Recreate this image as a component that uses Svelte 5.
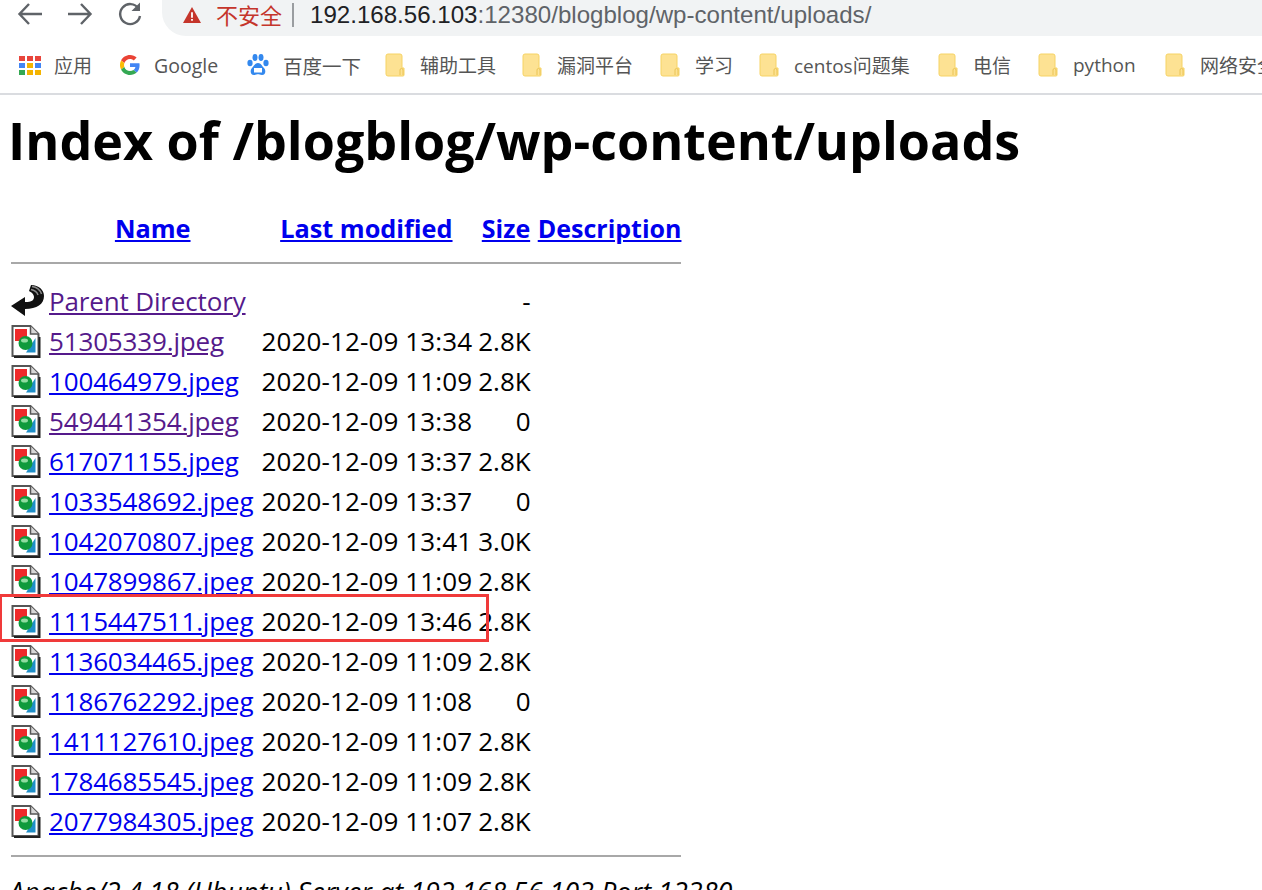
<script>
  const bookmarks = [
    { label: "辅助工具", w: 137 },
    { label: "漏洞平台", w: 138 },
    { label: "学习", w: 99 },
    { label: "centos问题集", w: 179 },
    { label: "电信", w: 100 },
    { label: "python", w: 127 },
    { label: "网络安全", w: 137 },
  ];
  const files = [
    { name: "51305339.jpeg", date: "2020-12-09 13:34", size: "2.8K", seen: true },
    { name: "100464979.jpeg", date: "2020-12-09 11:09", size: "2.8K" },
    { name: "549441354.jpeg", date: "2020-12-09 13:38", size: "0", seen: true },
    { name: "617071155.jpeg", date: "2020-12-09 13:37", size: "2.8K" },
    { name: "1033548692.jpeg", date: "2020-12-09 13:37", size: "0" },
    { name: "1042070807.jpeg", date: "2020-12-09 13:41", size: "3.0K" },
    { name: "1047899867.jpeg", date: "2020-12-09 11:09", size: "2.8K" },
    { name: "1115447511.jpeg", date: "2020-12-09 13:46", size: "2.8K" },
    { name: "1136034465.jpeg", date: "2020-12-09 11:09", size: "2.8K" },
    { name: "1186762292.jpeg", date: "2020-12-09 11:08", size: "0" },
    { name: "1411127610.jpeg", date: "2020-12-09 11:07", size: "2.8K" },
    { name: "1784685545.jpeg", date: "2020-12-09 11:09", size: "2.8K" },
    { name: "2077984305.jpeg", date: "2020-12-09 11:07", size: "2.8K" },
  ];
  const appsColors = ["#e8453c", "#e8453c", "#e8453c", "#4285f4", "#f4b400", "#4285f4", "#34a853", "#f4b400", "#f4b400"];
</script>

{#snippet folder()}
  <svg class="fold" width="20" height="24" viewBox="0 0 20 24">
    <path d="M3 1h12a2 2 0 0 1 2 2v12h2v7a1 1 0 0 1-1 1H3a2 2 0 0 1-2-2V3a2 2 0 0 1 2-2z" fill="#fde293" stroke="#f6d365" />
    <path d="M15 22v-5a1.500 1.500 0 0 1 3 0v5" fill="none" stroke="#eac455" />
  </svg>
{/snippet}

{#snippet fileIcon()}
  <svg class="ico" width="30" height="33" viewBox="0 0 30 33">
    <path d="M1.500 1h18l8 8v22h-26z" fill="#fff" stroke="#555" stroke-width="2" />
    <path d="M19.500 1v8h8" fill="#d8d8d8" stroke="#555" stroke-width="1.500" />
    <rect x="4" y="4" width="12" height="12" fill="#ee2a2a" />
    <path d="M15 27.500 24.500 13v14.500z" fill="#1f8fc8" />
    <circle cx="14.500" cy="18" r="7" fill="#0f9a3c" />
    <ellipse cx="13.500" cy="15.500" rx="3.500" ry="2" fill="#8fdca0" />
    <path d="M28.500 12v20H3" fill="none" stroke="#222" stroke-width="2" />
  </svg>
{/snippet}

<div class="page">
  <header class="chrome">
    <div class="nav">
      <svg width="30" height="30" viewBox="0 0 30 30" fill="none" stroke="#5f6368" stroke-width="2.400">
        <path d="M27 15H5M14 5 4.500 15 14 25" />
      </svg>
      <svg width="30" height="30" viewBox="0 0 30 30" fill="none" stroke="#5f6368" stroke-width="2.400">
        <path d="M3 15h22M16 5l9.500 10L16 25" />
      </svg>
      <svg width="30" height="30" viewBox="0 0 30 30" fill="none" stroke="#5f6368" stroke-width="2.400">
        <path d="M23.500 9.500A10 10 0 1 0 25 17" />
        <path d="M25 3.500V12h-8.500z" fill="#5f6368" stroke="none" />
      </svg>
      <div class="omnibox">
        <svg width="20" height="18" viewBox="0 0 22 20">
          <path d="M11 1 21 19H1z" fill="#c5352b" />
          <path d="M10 7h2v6h-2zM10 14.500h2v2h-2z" fill="#fff" />
        </svg>
        <span class="warn">不安全</span>
        <span class="bar"></span>
        <span class="url"><b>192.168.56.103</b>:12380/blogblog/wp-content/uploads/</span>
      </div>
    </div>
    <div class="bookmarks">
      <div class="bm apps">
        <span class="grid">
          {#each appsColors as c}<i style="background:{c}"></i>{/each}
        </span>
        应用
      </div>
      <div class="bm google">
        <svg width="20" height="20" viewBox="0 0 48 48">
          <path fill="#ea4335" d="M24 9.500c3.500 0 6.700 1.300 9.100 3.500l6.800-6.800C35.800 2.400 30.200 0 24 0 14.600 0 6.500 5.400 2.600 13.200l7.900 6.200C12.400 13.700 17.700 9.500 24 9.500z" />
          <path fill="#4285f4" d="M47 24.500c0-1.600-.1-3.100-.4-4.500H24v9h12.900c-.6 3-2.200 5.500-4.700 7.200l7.700 6c4.500-4.200 7.100-10.300 7.100-17.700z" />
          <path fill="#fbbc05" d="M10.500 28.600a14.500 14.500 0 0 1 0-9.200l-7.900-6.200a24 24 0 0 0 0 21.600z" />
          <path fill="#34a853" d="M24 48c6.500 0 11.900-2.100 15.900-5.800l-7.700-6c-2.200 1.500-5 2.300-8.200 2.300-6.300 0-11.600-4.200-13.500-9.900l-7.900 6.200C6.500 42.600 14.600 48 24 48z" />
        </svg>
        Google
      </div>
      <div class="bm baidu">
        <svg width="24" height="24" viewBox="0 0 24 24" fill="#3388ee">
          <ellipse cx="4" cy="10" rx="2.600" ry="3.200" />
          <ellipse cx="9" cy="4.500" rx="2.500" ry="3.400" />
          <ellipse cx="15" cy="4.500" rx="2.500" ry="3.400" />
          <ellipse cx="20" cy="10" rx="2.600" ry="3.200" />
          <path d="M12 10c3 0 4 3 6 5s2 7-2 7c-2 0-3-.7-4-.7S10 22 8 22c-4 0-4-5-2-7s3-5 6-5z" />
          <rect x="8" y="15" width="8" height="4.500" fill="#fff" />
        </svg>
        百度一下
      </div>
      {#each bookmarks as b}
        <div class="bm" style="width:{b.w}px">
          {@render folder()}
          <span>{b.label}</span>
        </div>
      {/each}
    </div>
  </header>

  <main class="listing">
    <h1>Index of /blogblog/wp-content/uploads</h1>
    <table>
      <thead>
        <tr>
          <th></th>
          <th><a href="#name">Name</a></th>
          <th><a href="#modified">Last modified</a></th>
          <th class="small"><a href="#size">Size</a></th>
          <th class="small"><a href="#description">Description</a></th>
        </tr>
        <tr><th colspan="5" class="rule"><hr /></th></tr>
      </thead>
      <tbody>
        <tr>
          <td class="icon">
            <svg class="ico" width="34" height="34" viewBox="0 0 34 34">
              <path d="M0 22 14 13v5c7 0 9-2 9-5 0-3-3-5-5-6l2-6c8 0 13 5 13 11 0 8-7 13-19 13v7z" fill="#111" />
              <path d="M21 2.500c4 .5 8 3 9.500 7.500M20 5.500c3 .5 6 2.500 7 5.500" fill="none" stroke="#8a8a8a" stroke-width="1.500" />
            </svg>
          </td>
          <td><a class="seen" href="#parent">Parent Directory</a></td>
          <td></td>
          <td class="num">-</td>
          <td></td>
        </tr>
        {#each files as f}
          <tr>
            <td class="icon">{@render fileIcon()}</td>
            <td><a class:seen={f.seen} href="#{f.name}">{f.name}</a></td>
            <td class="date">{f.date}</td>
            <td class="num">{f.size}</td>
            <td></td>
          </tr>
        {/each}
        <tr><th colspan="5" class="rule"><hr /></th></tr>
      </tbody>
    </table>
    <address>Apache/2.4.18 (Ubuntu) Server at 192.168.56.103 Port 12380</address>
  </main>

  <div class="mark"></div>
</div>

<style>
  :global(body) {
    margin: 0;
    background: #fff;
  }
  .page {
    position: relative;
    height: 890px;
    overflow: hidden;
    font-family: "Open Sans", "Noto Sans CJK SC", sans-serif;
    color: #111;
  }
  .chrome {
    height: 93px;
    border-bottom: 2px solid #dadce0;
    overflow: hidden;
  }
  .nav {
    display: flex;
    align-items: center;
    height: 36px;
    padding-left: 15px;
    gap: 20px;
  }
  .nav > svg {
    margin-bottom: 8px;
  }
  .omnibox {
    display: flex;
    align-items: center;
    flex: 1;
    height: 36px;
    margin-left: -3px;
    padding: 0 0 7px 20px;
    box-sizing: border-box;
    background: #f1f3f4;
    border-radius: 0 0 0 24px;
    white-space: nowrap;
  }
  .warn {
    margin-left: 14px;
    font-size: 22px;
    line-height: 28px;
    color: #c5352b;
  }
  .bar {
    width: 2px;
    height: 24px;
    margin: 0 16px 0 10px;
    background: #9a9da0;
  }
  .url {
    font-family: "Liberation Sans", sans-serif;
    font-size: 24.100px;
    color: #5f6368;
  }
  .url b {
    font-weight: 400;
    color: #202124;
  }
  .bookmarks {
    display: flex;
    align-items: center;
    height: 58px;
    padding: 0 0 0 19px;
    font-size: 19px;
    color: #555;
    white-space: nowrap;
  }
  .bm {
    display: flex;
    align-items: center;
    flex: none;
    gap: 15px;
  }
  .apps {
    width: 101px;
    gap: 13px;
  }
  .google {
    width: 126px;
    gap: 14px;
  }
  .baidu {
    width: 139px;
    gap: 13px;
  }
  .google, .baidu {
    font-size: 19.500px;
  }
  .grid {
    display: grid;
    grid-template-columns: repeat(3, 6px);
    gap: 2px;
  }
  .grid i {
    height: 5px;
  }
  .bm .fold {
    flex: none;
  }
  .listing {
    padding-left: 9px;
    font-size: 26px;
    color: #000;
  }
  h1 {
    margin: 12px 0 35px -1px;
    font-size: 52px;
    line-height: 66px;
    font-weight: 700;
    white-space: nowrap;
  }
  table {
    border-collapse: separate;
    border-spacing: 2px 0;
  }
  th {
    height: 40px;
    padding: 0;
    font-size: 25.300px;
    font-weight: 700;
    text-align: center;
  }
  th.small {
    font-size: 25px;
  }
  td {
    height: 40px;
    padding: 0 3px;
    white-space: nowrap;
  }
  td:nth-child(2) {
    padding: 0 3px 0 0;
    letter-spacing: -0.150px;
  }
  td.date {
    padding: 0 2px 0 3px;
    letter-spacing: 0.130px;
  }
  td.icon {
    width: 36px;
    padding: 0;
    line-height: 0;
  }
  .ico {
    display: block;
  }
  td.num {
    padding: 0 5px 0 2px;
    text-align: right;
  }
  a {
    color: #0000ee;
    text-decoration: underline;
  }
  a.seen {
    color: #551a8b;
  }
  .rule {
    height: 33px;
    padding-bottom: 3px;
    box-sizing: border-box;
  }
  hr {
    margin: 0;
    border: 0;
    border-top: 2px solid #a8a8a8;
  }
  address {
    font-style: italic;
    font-size: 27px;
    line-height: 36px;
    white-space: nowrap;
  }
  .mark {
    position: absolute;
    left: -1px;
    top: 594px;
    width: 484px;
    height: 42px;
    border: 3px solid #f03a3a;
  }
</style>
